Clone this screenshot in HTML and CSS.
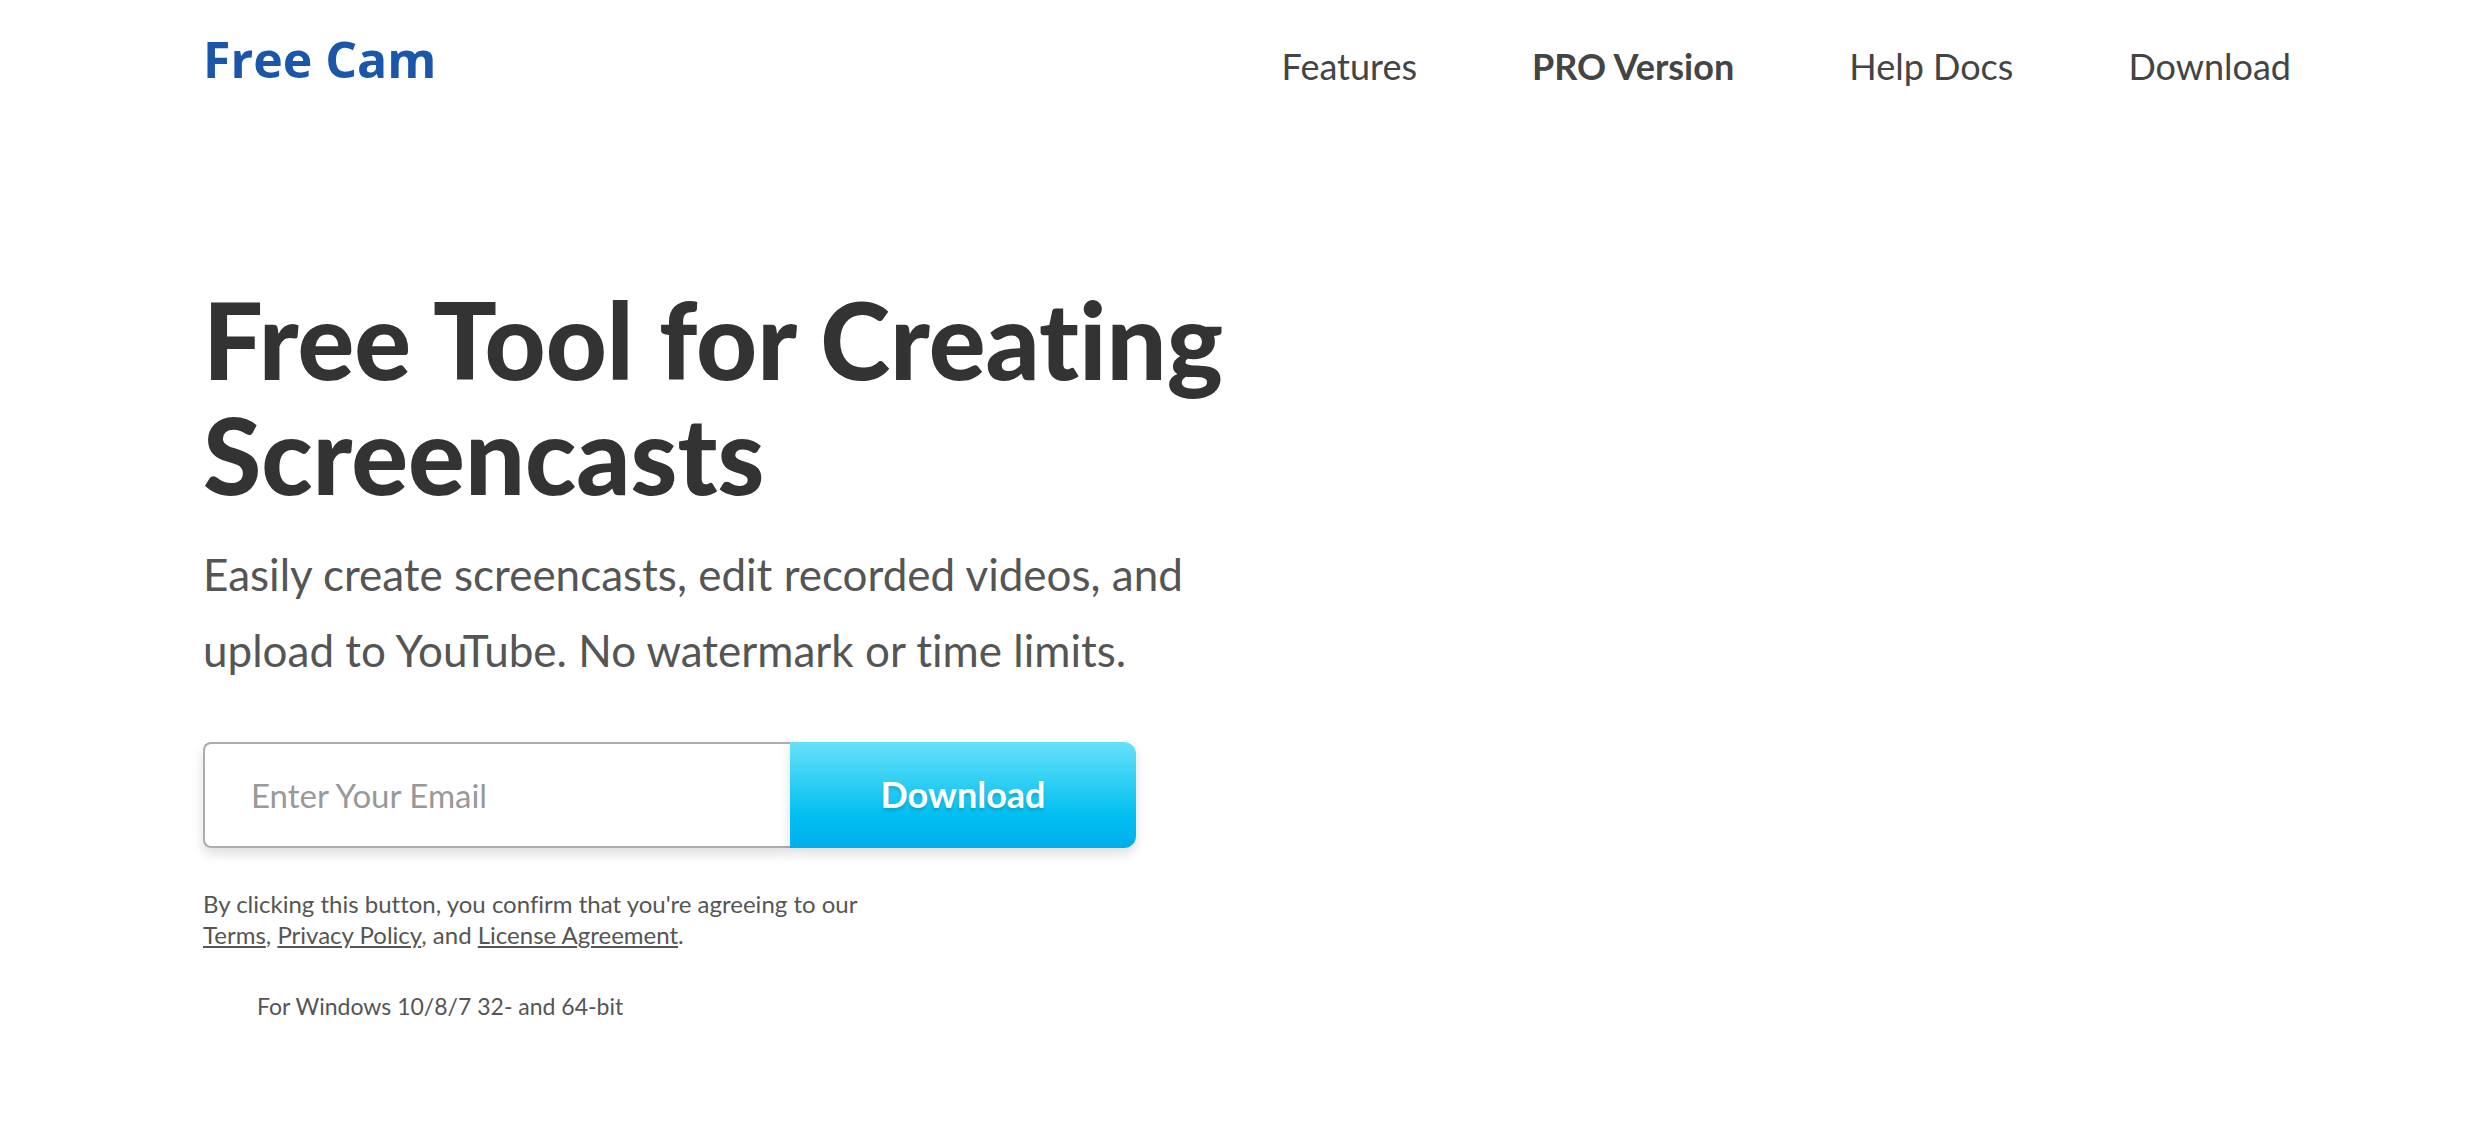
FILE: index.html
```html
<!DOCTYPE html>
<html lang="en">
<head>
  <meta charset="UTF-8">
  <meta name="viewport" content="width=device-width, initial-scale=1.0">
  <title>Free Cam - Free Tool for Creating Screencasts</title>
  <link rel="stylesheet" href="styles.css">
</head>
<body>

  <header class="header container">
    <a class="logo" href="#">Free Cam</a>
    <nav class="menu">
      <a href="#">Features</a>
      <a class="pro" href="#">PRO Version</a>
      <a href="#">Help Docs</a>
      <a href="#">Download</a>
    </nav>
  </header>

  <main class="hero container">
    <h1>Free Tool for Creating Screencasts</h1>
    <p class="lead">Easily create screencasts, edit recorded videos, and upload to YouTube. No watermark or time limits.</p>

    <form class="download-form">
      <input type="email" placeholder="Enter Your Email" aria-label="Enter Your Email">
      <button type="submit">Download</button>
    </form>

    <p class="agree">By clicking this button, you confirm that you're agreeing to our <a href="#">Terms</a>, <a href="#">Privacy Policy</a>, and <a href="#">License Agreement</a>.</p>
    <p class="platform">For Windows 10/8/7 32- and 64-bit</p>
  </main>

</body>
</html>
```
FILE: styles.css
```css
* {
  box-sizing: border-box;
}

body {
  margin: 0;
  font-family: Lato, sans-serif;
  font-variant-ligatures: none;
  color: #555;
  background: #fff;
}

h1, p {
  margin: 0;
}

.container {
  padding-left: 203px;
  padding-right: 181px;
}

/* Header */
.header {
  display: flex;
  justify-content: space-between;
  padding-top: 23px;
}

.logo {
  font-family: "Open Sans", sans-serif;
  font-size: 50px;
  line-height: 72px;
  font-weight: 700;
  color: #1a56aa;
  text-decoration: none;
}

.menu {
  display: flex;
  gap: 115px;
  padding-top: 20px;
}

.menu a {
  font-size: 36px;
  line-height: 46px;
  color: #444;
  text-decoration: none;
}

.menu .pro {
  font-weight: 700;
}

/* Hero */
.hero {
  padding-top: 187px;
}

.hero h1 {
  max-width: 1100px;
  font-family: "Lato Black", Lato, sans-serif;
  font-size: 106px;
  line-height: 115px;
  font-weight: 900;
  color: #333;
}

.lead {
  max-width: 1020px;
  margin-top: 24px;
  font-size: 44px;
  line-height: 76px;
}

.download-form {
  display: flex;
  max-width: 933px;
  margin-top: 54px;
}

.download-form input,
.download-form button {
  height: 106px;
  font-family: inherit;
  box-shadow: 0 6px 12px rgba(0, 0, 0, 0.13);
}

.download-form input {
  flex: 1;
  min-width: 0;
  padding: 0 46px;
  border: 2px solid #adadad;
  border-right: 0;
  border-radius: 8px 0 0 8px;
  font-size: 33px;
}

.download-form input::placeholder {
  color: #999;
}

.download-form button {
  width: 346px;
  padding-bottom: 3px;
  border: 0;
  border-radius: 0 12px 12px 0;
  font-size: 36px;
  font-weight: 700;
  color: #fff;
  text-shadow: 0 3px 3px rgba(0, 0, 0, 0.15);
  background: linear-gradient(#67e1f9, #00bff0 70%, #00aeeb);
  cursor: pointer;
}

.agree {
  max-width: 680px;
  margin-top: 40px;
  font-size: 24px;
  line-height: 31px;
}

.agree a {
  color: inherit;
}

.platform {
  margin-top: 41px;
  padding-left: 54px;
  font-size: 23px;
  line-height: 31px;
}
```
